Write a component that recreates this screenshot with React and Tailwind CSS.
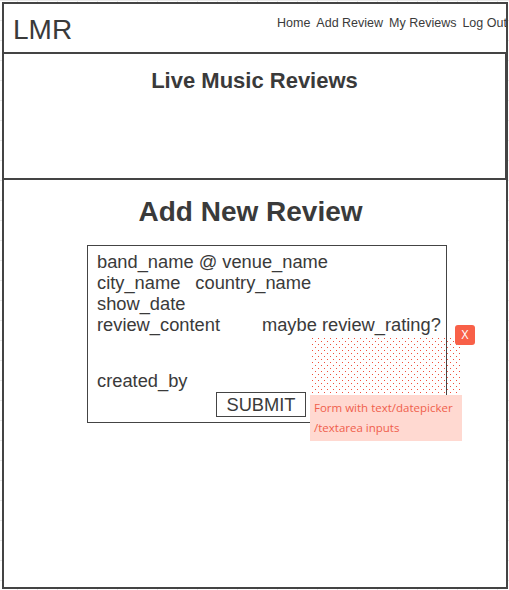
export default function App() {
  return (
    <div
      className="relative w-[509px] h-[590px] overflow-hidden bg-white bg-[linear-gradient(to_right,#e8e8e8_1px,transparent_1px),linear-gradient(to_bottom,#e8e8e8_1px,transparent_1px)] bg-[size:20px_20px] bg-[position:17px_0px] pt-[2px] pl-[2px] text-[#333]"
      style={{ fontFamily: '"Liberation Sans", Arial, sans-serif' }}
    >
      <div className="relative w-[506px] h-[587px] border-2 border-[#444] bg-white flex flex-col overflow-hidden">
        {/* Header */}
        <div className="h-[48px] flex items-start shrink-0">
          <div className="text-[28px] leading-none pl-[9px] pt-[12px] text-[#3a3a3a]">LMR</div>
          <nav className="ml-auto w-[229px] overflow-hidden flex gap-[6px] text-[12.5px] pt-[10px] whitespace-nowrap text-[#3a3a3a]">
            <span>Home</span>
            <span>Add Review</span>
            <span>My Reviews</span>
            <span>Log Out</span>
          </nav>
        </div>
        {/* Hero */}
        <div className="h-[128px] shrink-0 border-t-2 border-b-2 border-r border-[#444] flex justify-center">
          <h1 className="text-[22px] font-bold pt-[16px] leading-none text-[#3a3a3a]">Live Music Reviews</h1>
        </div>
        {/* Main */}
        <div className="flex flex-col">
          <h2 className="self-center text-[28px] font-bold leading-none mt-[18px] mr-[9px] text-[#3a3a3a]">Add New Review</h2>
          <div className="relative mt-[19px] ml-[83px] w-[360px] h-[178px] border border-[#444] px-[9px] pt-[5px] text-[18.3px] leading-[21px] whitespace-nowrap text-[#3a3a3a]">
            <div>band_name @ venue_name</div>
            <div className="flex gap-[15px]">
              <span>city_name</span>
              <span>country_name</span>
            </div>
            <div>show_date</div>
            <div className="flex gap-[42px]">
              <span>review_content</span>
              <span>maybe review_rating?</span>
            </div>
            <div className="mt-[35px]">created_by</div>
            <div className="flex justify-center pr-[12px] mt-[1px]">
              <button className="border border-[#444] px-[9px] h-[25px] leading-[23px] text-[18.3px] text-[#3a3a3a]">SUBMIT</button>
            </div>
          </div>
        </div>
        {/* Annotation overlay */}
        <div className="absolute left-[306px] top-[333px] w-[152px] h-[58px] bg-[radial-gradient(circle_at_0.5px_0.5px,#f0503c_0.6px,transparent_0.75px),radial-gradient(circle_at_0.5px_0.5px,#f0503c_0.6px,transparent_0.75px)] bg-[size:6px_6px] bg-[position:2px_1px,5px_4px]"></div>
        <div
          className="absolute left-[306px] top-[391px] w-[152px] h-[46px] bg-[#ffd9d1] text-[#f0604c] text-[11.5px] leading-[20px] pl-[4px] pt-[3px] whitespace-nowrap overflow-hidden"
          style={{ fontFamily: '"Open Sans", "Noto Sans", sans-serif' }}
        >
          <div>Form with text/datepicker</div>
          <div>/textarea inputs</div>
        </div>
        <div
          className="absolute left-[451px] top-[321px] w-[20px] h-[20px] rounded-[3px] bg-[#f86048] text-white text-[12px] flex items-center justify-center"
          style={{ fontFamily: '"Open Sans", "Noto Sans", sans-serif' }}
        >
          X
        </div>
      </div>
    </div>
  );
}
